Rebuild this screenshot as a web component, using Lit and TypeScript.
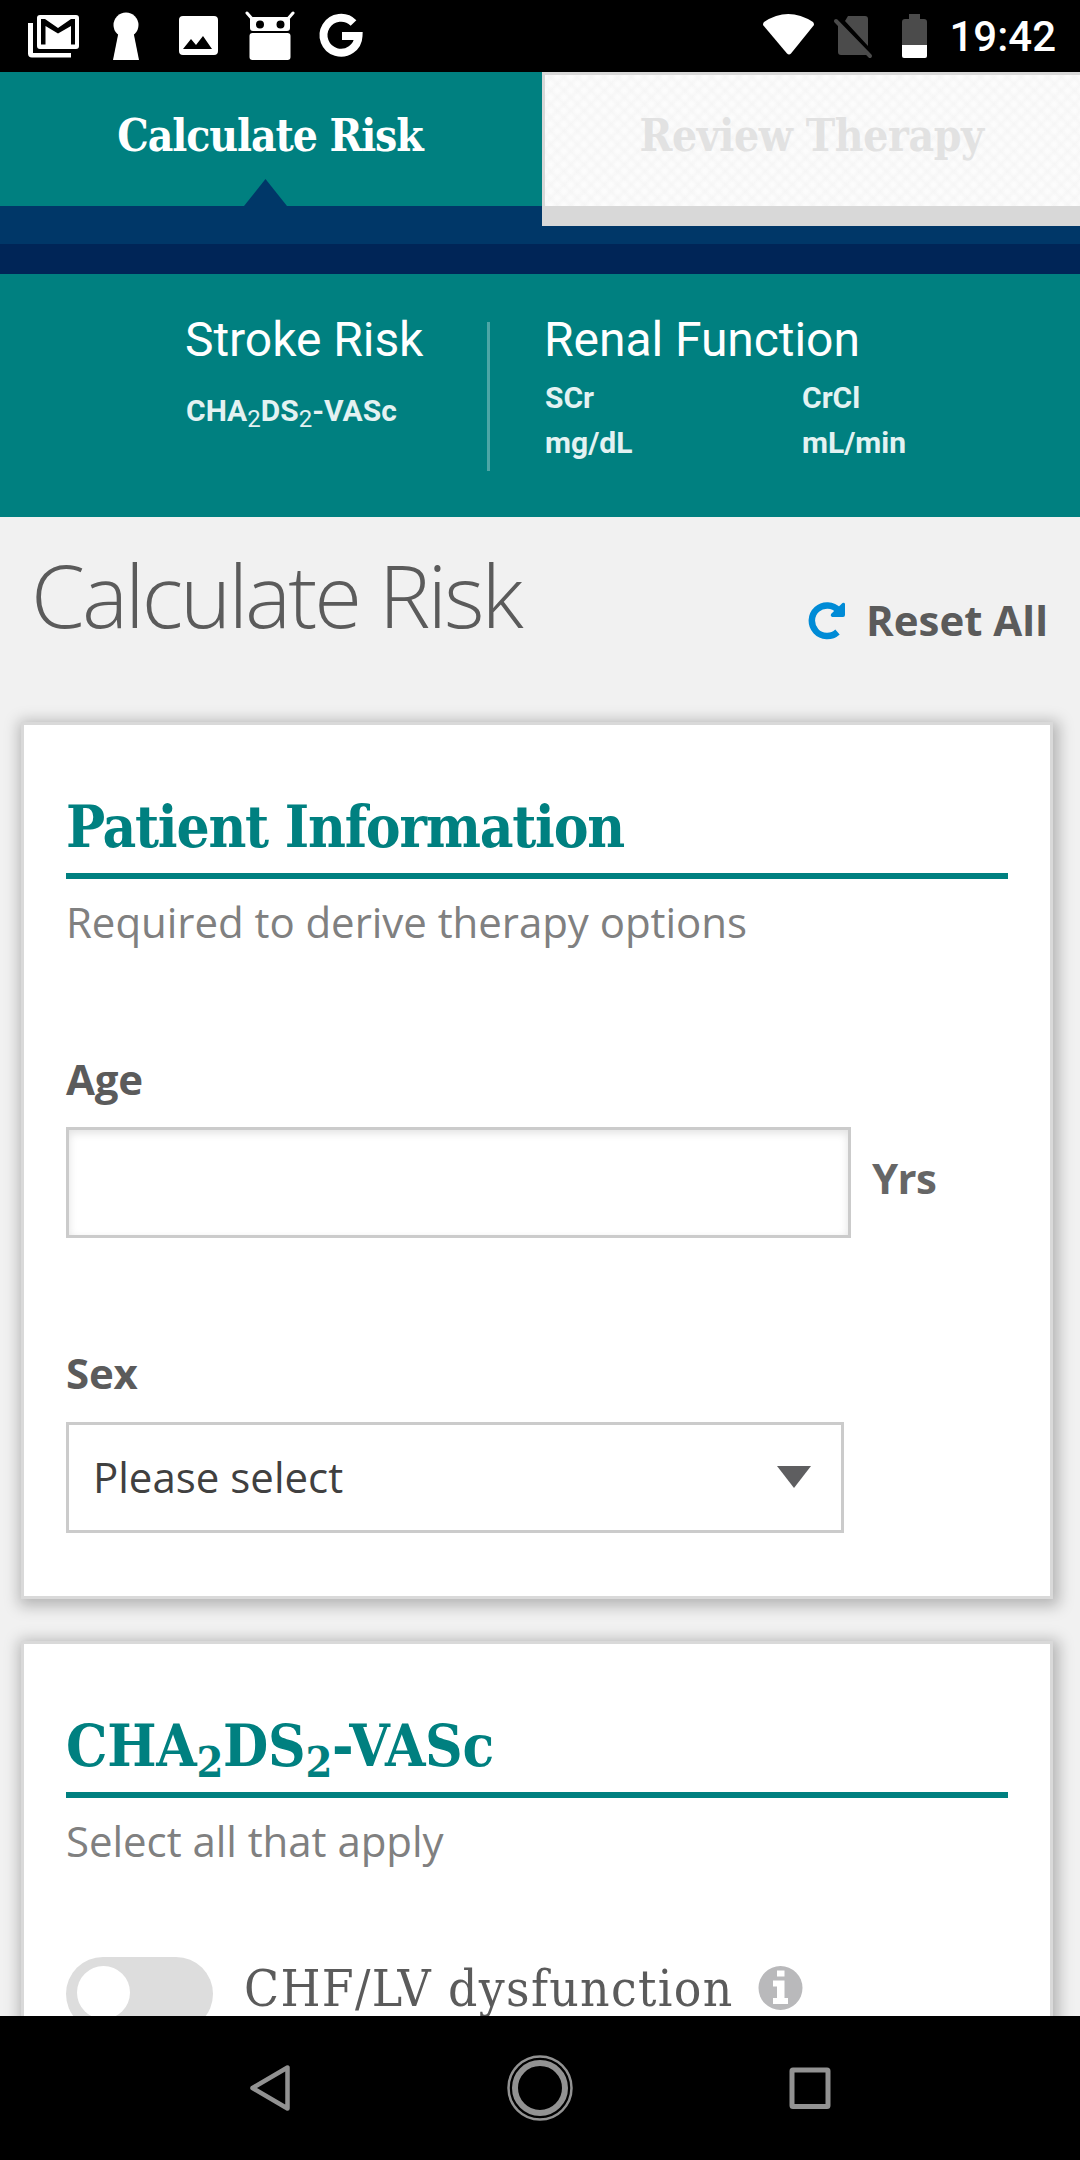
import { LitElement, html, css } from "lit";
import { customElement } from "lit/decorators.js";

@customElement("app-root")
export class AppRoot extends LitElement {
  static styles = css`
    :host { display: block; width: 1080px; height: 2160px; overflow: hidden; }
    * { box-sizing: border-box; }
    svg { display: block; flex: none; }
    .screen { width: 1080px; height: 2160px; display: flex; flex-direction: column; background: #f1f1f1; font-family: "Open Sans", sans-serif; color: #5b5b5b; white-space: nowrap; }
    .slab { font-family: "Roboto Slab", "DejaVu Serif Condensed", "DejaVu Serif", serif; font-stretch: condensed; }
    .status { height: 72px; flex: none; background: #000; display: flex; justify-content: space-between; padding: 0 24px 0 28px; }
    .group { display: flex; }
    .clock { font: 500 42px/74px Roboto, sans-serif; color: #fff; margin-left: 20px; }
    .tabs { height: 172px; flex: none; display: flex; align-items: flex-start; background: #003768; }
    .tab { font-weight: 700; font-size: 44px; line-height: 60px; text-align: center; padding-top: 34px; }
    .active { width: 542px; height: 134px; padding-right: 2px; background: #008080; color: #fff; position: relative; letter-spacing: -1.1px; }
    .active svg { position: absolute; left: 243.500px; bottom: 0; }
    .idle { width: 538px; height: 154px; padding: 31px 2px 0 0; color: #e2e2e2; letter-spacing: -0.4px; border: solid #d8d8d8; border-width: 3px 0 20px 3px;
      background: repeating-linear-gradient(45deg, #f3f3f380 0, #f3f3f300 3.500px, #f3f3f300 6px, #f3f3f380 9.500px), repeating-linear-gradient(-45deg, #f3f3f380 0, #f3f3f300 3.500px, #f3f3f300 6px, #f3f3f380 9.500px), #fcfcfc; }
    .strip { height: 30px; flex: none; background: #002557; }
    .summary { height: 243px; flex: none; background: #008080; display: flex; padding: 37px 0 0 185px; font-family: Roboto, sans-serif; color: #fff; }
    .stroke { width: 302px; }
    .renal { padding-left: 54px; }
    .divider { width: 3px; height: 149px; margin-top: 11px; background: #4da6a6; }
    .big { font-size: 48px; line-height: 58px; letter-spacing: -0.05px; }
    .small { font-size: 30px; font-weight: 700; line-height: 45px; color: #e3f2f2; padding-left: 1px; }
    .score { margin-top: 19px; }
    .lower { font-size: 24px; font-weight: 400; line-height: 0; position: relative; top: 6px; }
    .grid { display: grid; grid-template-columns: 257px auto; margin-top: 6px; }
    .head { height: 205px; flex: none; display: flex; justify-content: space-between; padding: 0 32px 0 31px; }
    .title { font-size: 87px; font-weight: 300; line-height: 120px; letter-spacing: -3px; margin-top: 17px; }
    .reset { display: flex; height: 60px; margin-top: 73px; font-weight: 700; font-size: 42px; line-height: 60px; }
    .reset svg { margin: 12px 20px 0 0; }
    .body { flex: 1; overflow: hidden; margin-top: -30px; padding: 30px 27px 0 21px; }
    .card { border: 3px solid #d9d9d9; background: #fff; box-shadow: 2px 3px 14px 4px rgba(0, 0, 0, 0.25); padding: 62px 42px 0; }
    .patient { height: 877px; margin-bottom: 42px; }
    .score-card { height: 500px; }
    .ch { height: 92px; border-bottom: 6px solid #008080; color: #008080; font-weight: 700; font-size: 58px; line-height: 80px; letter-spacing: -0.3px; }
    .patient .ch { letter-spacing: -1.25px; }
    .low { font-size: 43px; line-height: 0; position: relative; top: 11px; }
    .note { font-size: 42px; line-height: 56px; margin-top: 15px; color: #808080; letter-spacing: -0.05px; }
    .label { font-weight: 700; font-size: 42px; line-height: 56px; letter-spacing: -0.2px; }
    .age { margin-top: 101px; }
    .row { display: flex; margin-top: 20px; }
    .input { width: 785px; height: 111px; border: 3px solid #cbcbcb; box-shadow: inset 0 3px 8px rgba(0, 0, 0, 0.12); }
    .row .unit { margin: 23px 0 0 21px; color: #666; letter-spacing: -0.7px; }
    .sex { margin-top: 107px; }
    .select { width: 778px; height: 111px; margin-top: 21px; border: 3px solid #cbcbcb; display: flex; justify-content: space-between; align-items: center; padding: 0 30px 1px 24px; font-size: 42px; line-height: 56px; color: #404040; }
    .option { display: flex; margin-top: 88px; font-size: 51px; line-height: 63px; letter-spacing: 1.35px; }
    .toggle { width: 147px; height: 74px; border-radius: 37px; background: #ddd; padding: 9px 11px; margin-right: 31px; }
    .knob { width: 53px; height: 53px; border-radius: 50%; background: #fff; }
    .option svg { margin: 9px 0 0 24px; }
    .nav { height: 144px; flex: none; background: #000; display: flex; padding: 38px 0 0 248px; }
  `;

  render() {
    return html`<div class="screen">
      <div class="status">
        <div class="group">
          <svg width="340" height="72" viewBox="28 0 340 72" fill="#fff">
            <path d="M28 23h5v30h38v4.500H32q-4 0-4-4z" />
            <path fill-rule="evenodd" d="M40 15h36q3 0 3 3v28q0 3-3 3H40q-3 0-3-3V18q0-3 3-3zm1 4v25.500h4.500V26L58 33.500 71 26v18.500h4V19h-4L58 28 45 19z" />
            <circle cx="126" cy="25" r="12.5" /><path d="M119 30h14l6 30h-26z" />
            <path fill-rule="evenodd" d="M183 16h31q4 0 4 4v31q0 4-4 4h-31q-4 0-4-4V20q0-4 4-4zm0 33h29l-9-13-7 9-5-6z" />
            <path d="M247 13l7 8M293 13l-7 8" stroke="#fff" stroke-width="3" stroke-linecap="round" />
            <path fill-rule="evenodd" d="M253 17h34q3 0 3 3v8q0 3-3 3h-34q-3 0-3-3v-8q0-3 3-3zm7 3.500a4 4 0 1 0 0 8 4 4 0 1 0 0-8zm20.500 0a4 4 0 1 0 0 8 4 4 0 1 0 0-8z" />
            <rect x="249.500" y="33" width="41" height="27" rx="3" />
            <path d="M353.500 23A17.500 17.500 0 1 0 358.500 36H342" fill="none" stroke="#fff" stroke-width="8" />
          </svg>
        </div>
        <div class="group">
          <svg width="166" height="72" viewBox="762 0 166 72">
            <path d="M763 22q24-16 49 0 1 1 1 3L790 53.500q-2 2-4 0L762 25q0-2 1-3z" fill="#fff" />
            <path d="M847 16h17q3 0 3 3v27l-23-25zM837 24l30 31h-27q-3 0-3-3z" fill="#4b4b4b" />
            <path d="M835 21l34 35" stroke="#4b4b4b" stroke-width="4" stroke-linecap="round" />
            <path d="M908 14h11v5h4q3 0 3 3v23h-25V22q0-3 3-3h4z" fill="#4b4b4b" />
            <path d="M901 45h25v11q0 2-2 2h-21q-2 0-2-2z" fill="#fff" />
          </svg>
          <div class="clock">19:42</div>
        </div>
      </div>
      <div class="tabs">
        <div class="tab active slab">Calculate Risk
          <svg width="43" height="27" viewBox="0 0 43 27"><path d="M0 27L21.500 0 43 27z" fill="#003768" /></svg>
        </div>
        <div class="tab idle slab">Review Therapy</div>
      </div>
      <div class="strip"></div>
      <div class="summary">
        <div class="stroke">
          <div class="big">Stroke Risk</div>
          <div class="small score">CHA<span class="lower">2</span>DS<span class="lower">2</span>-VASc</div>
        </div>
        <div class="divider"></div>
        <div class="renal">
          <div class="big">Renal Function</div>
          <div class="small grid"><span>SCr</span><span>CrCl</span><span>mg/dL</span><span>mL/min</span></div>
        </div>
      </div>
      <div class="head">
        <div class="title">Calculate Risk</div>
        <div class="reset">
          <svg width="38" height="38" viewBox="0 0 38 38">
            <path d="M30.500 8.500A15.300 15.300 0 1 0 29.500 30" fill="none" stroke="#008bd6" stroke-width="6.500" />
            <path d="M37 2v11q0 2-2 2H24q-2-1-1-3L34.500 1q2-1 2.500 1z" fill="#008bd6" />
          </svg>Reset All
        </div>
      </div>
      <div class="body">
        <div class="card patient">
          <div class="ch slab">Patient Information</div>
          <div class="note">Required to derive therapy options</div>
          <div class="label age">Age</div>
          <div class="row"><div class="input"></div><div class="label unit">Yrs</div></div>
          <div class="label sex">Sex</div>
          <div class="select">Please select
            <svg width="34" height="22" viewBox="0 0 34 22"><path d="M0 0h34L17 22z" fill="#5e5e60" /></svg>
          </div>
        </div>
        <div class="card score-card">
          <div class="ch slab">CHA<span class="low">2</span>DS<span class="low">2</span>-VASc</div>
          <div class="note">Select all that apply</div>
          <div class="option slab">
            <div class="toggle"><div class="knob"></div></div>
            <span>CHF/LV dysfunction</span>
            <svg width="45" height="45" viewBox="0 0 45 45">
              <circle cx="22.500" cy="22" r="22" fill="#b9b9bb" />
              <path d="M19 4.500h7.500v6H19zM15 14.500h11.500V32H30v6H15v-6h4V20.500h-4z" fill="#fff" />
            </svg>
          </div>
        </div>
      </div>
      <div class="nav">
        <svg width="584" height="68" viewBox="248 2054 584 68" fill="none" stroke="#929292">
          <path d="M252.500 2088L287.500 2067.500V2108.500z" stroke-width="4.500" stroke-linejoin="round" />
          <circle cx="540" cy="2088" r="31.500" stroke-width="2.500" />
          <circle cx="540" cy="2088" r="25" stroke-width="6" />
          <rect x="792" y="2070" width="36" height="36.500" rx="1" stroke-width="5" />
        </svg>
      </div>
    </div>`;
  }
}
